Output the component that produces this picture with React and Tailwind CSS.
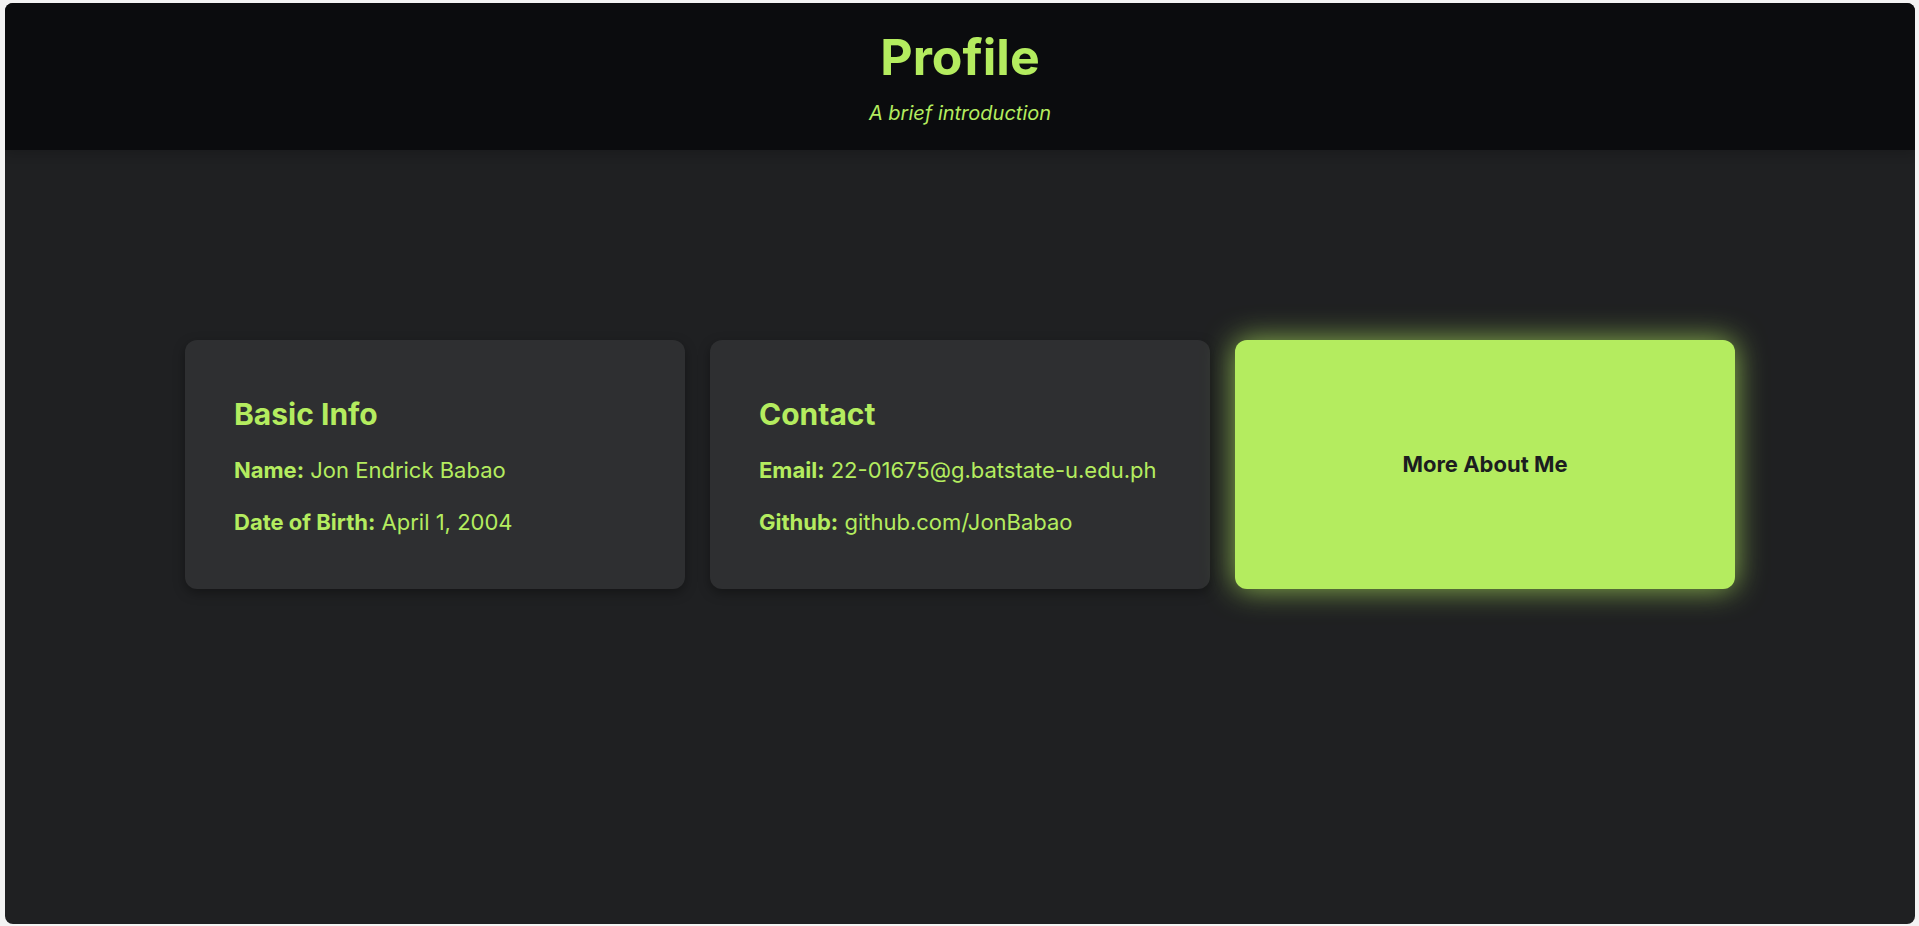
import React from "react";

const green = "text-[#b4ec5f]";

const InfoCard = ({ title, rows }) => (
  <div className="h-[249px] rounded-xl bg-[#2e2f31] shadow-[0_4px_12px_rgba(0,0,0,0.35)] pl-[49px] pr-6 pt-[56px]">
    <h2 className={`text-[30px] leading-9 font-bold ${green}`}>{title}</h2>
    {rows.map((row) => (
      <p key={row.label} className={`mt-6 text-[22px] leading-7 whitespace-nowrap ${green}`}>
        <span className="font-bold">{row.label}:</span> {row.value}
      </p>
    ))}
  </div>
);

const App = () => {
  return (
    <div className="min-h-screen bg-[#f3f3f3] pl-[5px] pr-[4px] pt-[3px] pb-[2px] font-['Inter','Noto_Sans',sans-serif]">
      <div className="h-[921px] rounded-lg overflow-hidden bg-[#1f2022] flex flex-col">
        {/* header */}
        <header className="bg-[#0b0c0e] pt-[29px] pb-[23px] text-center shadow-[0_4px_10px_rgba(0,0,0,0.15)]">
          <h1 className={`text-[50px] leading-none font-bold ${green}`}>Profile</h1>
          <p className={`mt-[17px] text-[20px] leading-7 italic ${green}`}>A brief introduction</p>
        </header>

        {/* cards */}
        <main className="pt-[190px]">
          <div className="w-[1550px] mx-auto grid grid-cols-3 gap-[25px]">
            <InfoCard
              title="Basic Info"
              rows={[
                { label: "Name", value: "Jon Endrick Babao" },
                { label: "Date of Birth", value: "April 1, 2004" },
              ]}
            />
            <InfoCard
              title="Contact"
              rows={[
                { label: "Email", value: "22-01675@g.batstate-u.edu.ph" },
                { label: "Github", value: "github.com/JonBabao" },
              ]}
            />
            <button className="h-[249px] rounded-xl bg-[#b4ec5f] shadow-[0_0_30px_rgba(180,236,95,0.75)] flex items-center justify-center text-[22px] font-bold text-[#1c1d1f]">
              More About Me
            </button>
          </div>
        </main>
      </div>
    </div>
  );
};

export default App;
